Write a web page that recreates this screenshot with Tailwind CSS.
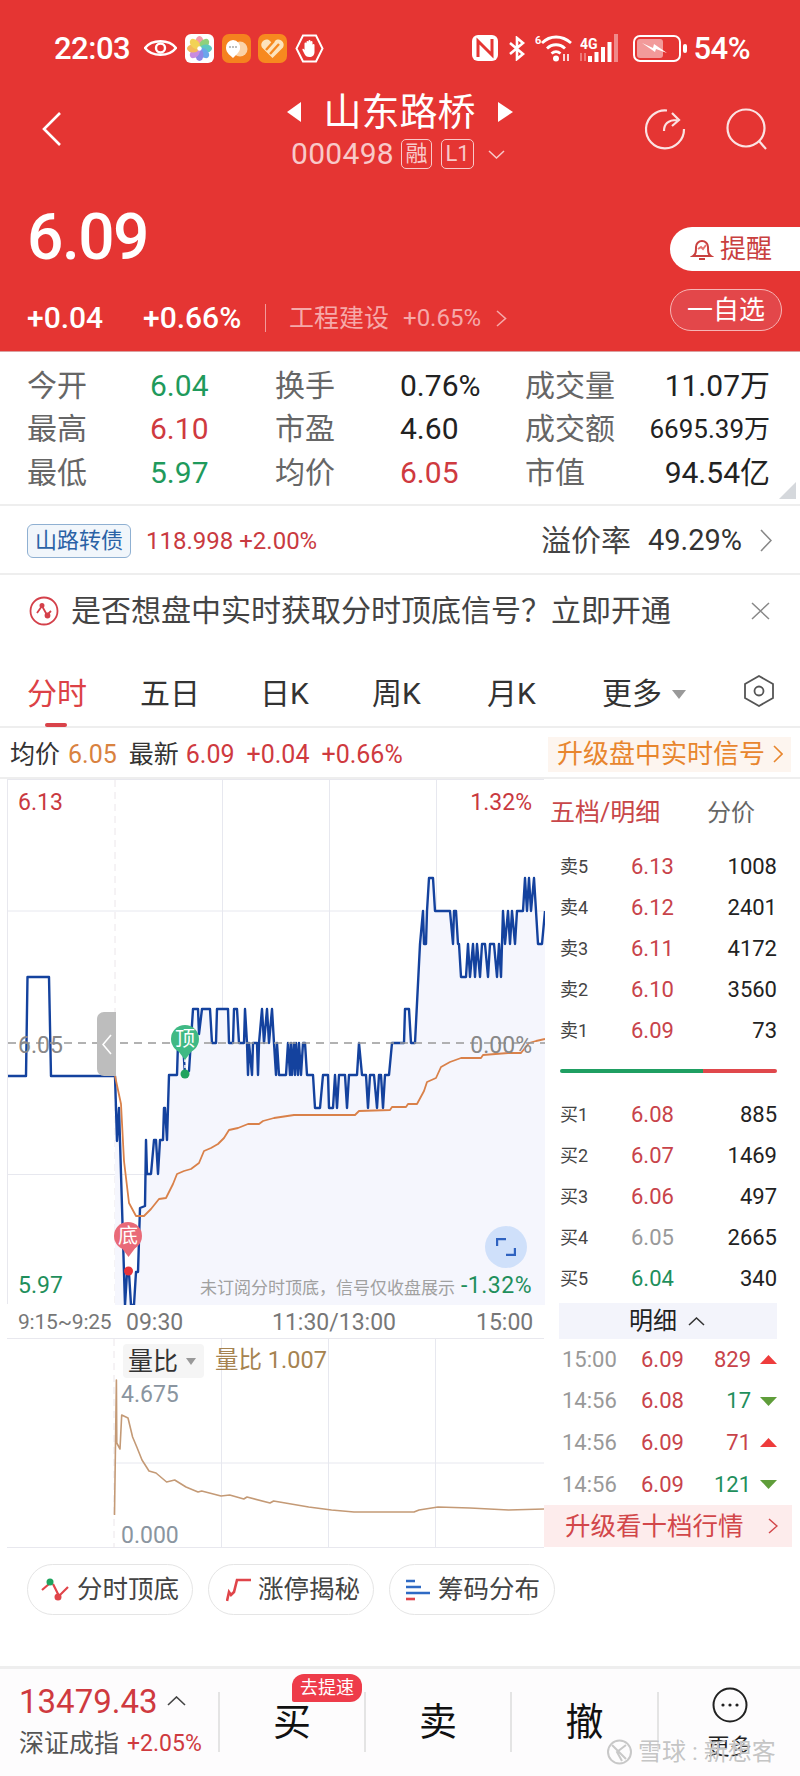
<!DOCTYPE html>
<html lang="zh-CN">
<head>
  <meta charset="UTF-8">
  <title>山东路桥 000498</title>
  <script src="https://cdn.jsdelivr.net/npm/@tailwindcss/browser@4"></script>
</head>
<body class="bg-white text-[#222] font-['Roboto','Noto_Sans_CJK_SC',sans-serif]">
<div class="w-[800px] h-[1776px] overflow-hidden relative">

  <!-- red quote header -->
  <header class="h-[352px] bg-[#e53533] text-white border-b border-[#d9a0a0]">
    <div class="h-[32px] translate-y-[32px] flex items-center pl-[54px] pr-[50px]">
      <span class="text-[31px] leading-none w-[80px] font-medium tracking-[-0.5px]">22:03</span>
      <svg class="ml-[10px]" width="33" height="16" viewBox="0 0 33 16" fill="none" stroke="#fff" stroke-width="2.4"><path d="M1 8C8-1 25-1 32 8 25 17 8 17 1 8Z"/><circle cx="16.5" cy="8" r="4.5"/></svg>
      <svg class="ml-[8px]" width="29" height="29" viewBox="0 0 29 29"><rect width="29" height="29" rx="6" fill="#fff"/><g transform="translate(14.5 14.5)"><ellipse cy="-6.5" rx="4" ry="6" fill="#f59aa8"/><ellipse cy="-6.5" rx="4" ry="6" fill="#8fd17a" transform="rotate(45)"/><ellipse cy="-6.5" rx="4" ry="6" fill="#5ec8c0" transform="rotate(90)"/><ellipse cy="-6.5" rx="4" ry="6" fill="#6aa6ec" transform="rotate(135)"/><ellipse cy="-6.5" rx="4" ry="6" fill="#8e86e6" transform="rotate(180)"/><ellipse cy="-6.5" rx="4" ry="6" fill="#c98be0" transform="rotate(225)"/><ellipse cy="-6.5" rx="4" ry="6" fill="#f4b85c" transform="rotate(270)"/><ellipse cy="-6.5" rx="4" ry="6" fill="#f2d255" transform="rotate(315)"/><circle r="2.2" fill="#fff"/></g></svg>
      <svg class="ml-[8px]" width="29" height="29" viewBox="0 0 29 29"><rect width="29" height="29" rx="7" fill="#f5821f"/><circle cx="18" cy="15" r="7.5" fill="#fbd3a8"/><path d="M11 6a7.5 7.5 0 0 1 7 9c-1 4-5 7-7 9-2-2-7-5-7-10a7.5 7.5 0 0 1 7-8Z" fill="#fff"/><circle cx="8" cy="13" r="1" fill="#aaa"/><circle cx="11" cy="13" r="1" fill="#aaa"/><circle cx="14" cy="13" r="1" fill="#aaa"/></svg>
      <svg class="ml-[7px]" width="29" height="29" viewBox="0 0 29 29"><rect width="29" height="29" rx="7" fill="#f7891f"/><path d="M14.5 24 4 13.5C1 8 8 3 12 7l2.5 2.5L17 7c4-4 11 1 8 6.5Z" fill="#fde3bd"/><path d="M8 16 16 7M12 20l9-10" stroke="#f7891f" stroke-width="2.4"/></svg>
      <svg class="ml-[8px]" width="29" height="29" viewBox="0 0 29 29"><path d="M8 1.500h13L27.500 14.500 21 27.500H8L1.500 14.500Z" fill="none" stroke="#fff" stroke-width="2"/><path d="M9.500 15V9.500a1 1 0 0 1 2 0V8a1 1 0 0 1 2 0V7a1 1 0 0 1 2 0v1a1 1 0 0 1 2 0v3a1 1 0 0 1 2 0v7c0 3-2 5-5 5-3 0-4-1-5-3l-2-4c-.5-1 1-2 2 0Z" fill="#fff"/></svg>
      <svg class="ml-auto" width="26" height="26" viewBox="0 0 26 26"><rect width="26" height="26" rx="6" fill="#fff"/><path d="M6 22V6l14 14V4" fill="none" stroke="#e53533" stroke-width="3"/></svg>
      <svg class="ml-[10px]" width="18" height="25" viewBox="0 0 18 25" fill="none" stroke="#fff" stroke-width="2.6"><path d="M2 7l13 11-6 5V2l6 5L2 18"/></svg>
      <svg class="ml-[9px]" width="37" height="28" viewBox="0 0 37 28"><text x="0" y="10" fill="#fff" font-size="11" font-weight="700">6</text><g fill="none" stroke="#fff" stroke-width="2.800"><path d="M7 9C15 1 27 1 36 9"/><path d="M12 14.500c5-5 13-5 18 0"/><path d="M16.500 19.500c3-2.500 6-2.500 9 0"/></g><circle cx="21" cy="24.500" r="3" fill="#fff"/><path d="M29 20v7M33 20v7" stroke="#fff" stroke-width="1.600"/></svg>
      <div class="ml-[8px] relative w-[46px] h-[28px]">
        <svg width="46" height="28" viewBox="0 0 46 28"><rect x="34" y="0" width="4" height="28" fill="#f08a8a"/><rect x="27.500" y="8" width="4" height="20" fill="#fff"/><rect x="21" y="13" width="4" height="15" fill="#fff"/><rect x="14.500" y="18" width="4" height="10" fill="#fff"/><rect x="8" y="22" width="4" height="6" fill="#fff"/><path d="M1 19v8M5 19v8" stroke="#f08a8a" stroke-width="1.600"/><text x="0" y="15" fill="#fff" font-size="14" font-weight="700">4G</text></svg>
      </div>
      <svg class="ml-[7px]" width="55" height="27" viewBox="0 0 55 27"><rect x="1" y="1" width="46" height="25" rx="6" fill="none" stroke="#fff" stroke-width="2"/><rect x="4" y="4" width="26" height="19" rx="3" fill="#f29a9a"/><path d="M9 8l11 5 1-4 13 9-11-4-1 3Z" fill="#fff"/><rect x="50" y="9" width="4" height="9" rx="2" fill="#fff"/></svg>
      <span class="ml-[5px] text-[31px] leading-none font-medium tracking-[-0.5px]">54%</span>
    </div>

    <div class="mt-[58px] h-[84px] grid grid-cols-[1fr_auto_1fr]">
      <div class="pl-[42px] pt-[22px]">
        <svg width="20" height="34" viewBox="0 0 20 34" fill="none" stroke="#fff" stroke-width="2.600"><path d="M18 1 2 17l16 16"/></svg>
      </div>
      <div class="flex flex-col items-center">
        <div class="flex items-center h-[44px]">
          <svg width="14" height="20" viewBox="0 0 14 20"><path d="M14 0v20L0 10Z" fill="#fff"/></svg>
          <span class="mx-[22px] text-[38px] leading-none">山东路桥</span>
          <svg width="15" height="20" viewBox="0 0 15 20"><path d="M0 0v20l15-10Z" fill="#fff"/></svg>
        </div>
        <div class="mt-[5px] flex items-center text-[#f8c9c9]">
          <span class="text-[30px] leading-none tracking-[0.3px] w-[110px]">000498</span>
          <span class="w-[31px] h-[30px] border-[1.5px] border-[#f8c9c9] rounded-[5px] flex items-center justify-center text-[22px] leading-none">融</span>
          <span class="ml-[9px] w-[33px] h-[30px] border-[1.5px] border-[#f8c9c9] rounded-[5px] flex items-center justify-center text-[22px] leading-none">L1</span>
          <svg class="ml-[14px] mr-[4px]" width="17" height="9" viewBox="0 0 17 9" fill="none" stroke="#f8c9c9" stroke-width="1.500"><path d="M1 1l7.500 7L16 1"/></svg>
        </div>
      </div>
      <div class="flex justify-end items-start pr-[32px] pt-[18px] gap-[40px]">
        <svg width="42" height="42" viewBox="0 0 42 42" fill="none" stroke="#fbe3e3" stroke-width="2.200"><path d="M23 2.500A19 19 0 1 0 40 21"/><path d="M20 23c0-8 5-11 13-11M28 5l7 7-7 6"/></svg>
        <svg width="42" height="42" viewBox="0 0 42 42" fill="none" stroke="#fbe3e3" stroke-width="2.200"><circle cx="20" cy="20" r="18.500"/><path d="M33 33l7 8"/></svg>
      </div>
    </div>

    <div class="mt-[30px] flex justify-between pl-[27px]">
      <div>
        <div class="text-[64px] leading-none h-[62px] mt-[2px] font-medium tracking-[-1.5px]">6.09</div>
        <div class="mt-[35px] flex items-center h-[30px]">
          <span class="w-[116px] text-[30px] leading-none font-medium">+0.04</span>
          <span class="text-[30px] leading-none font-medium w-[122px]">+0.66%</span>
          <span class="w-px h-[28px] bg-[#f29a9a]"></span>
          <span class="ml-[23px] text-[25px] leading-none text-[#f6a9a9]">工程建设</span>
          <span class="ml-[14px] text-[24px] leading-none text-[#f6a9a9]">+0.65%</span>
          <svg class="ml-[15px]" width="11" height="17" viewBox="0 0 11 17" fill="none" stroke="#f6a9a9" stroke-width="1.600"><path d="M1 1l8.500 7.500L1 16"/></svg>
        </div>
      </div>
      <div class="flex flex-col items-end mt-[23px]">
        <div class="w-[130px] h-[44px] bg-white rounded-l-[22px] flex items-center pl-[20px] text-[#c9403f]">
          <svg width="24" height="24" viewBox="0 0 24 24" fill="none" stroke="#c9403f" stroke-width="2"><path d="M3 19c3-2 3-4 3-9a6 6 0 0 1 12 0c0 5 0 7 3 9Z"/><path d="M9 22h6"/><path d="M8 12l3-2 2 2 3-4" stroke="#e5736f"/></svg>
          <span class="ml-[6px] text-[26px] leading-none">提醒</span>
        </div>
        <div class="mt-[18px] mr-[18px] w-[112px] h-[42px] rounded-[21px] bg-[#e3474a] border border-[#f6b5b5] flex items-center justify-center text-[26px] leading-none">一自选</div>
      </div>
    </div>
  </header>

  <!-- stats -->
  <section class="h-[154px] pt-[12px] px-[27px] border-b-2 border-[#eee] relative">
    <div class="grid grid-cols-[123px_125px_125px_125px_90px_155px] auto-rows-[43.5px] items-center text-[30px] leading-none">
      <span class="text-[#666]">今开</span><span class="text-[#1f9a5c]">6.04</span>
      <span class="text-[#666]">换手</span><span>0.76%</span>
      <span class="text-[#666]">成交量</span><span class="text-right">11.07万</span>
      <span class="text-[#666]">最高</span><span class="text-[#cf3a3f]">6.10</span>
      <span class="text-[#666]">市盈</span><span>4.60</span>
      <span class="text-[#666]">成交额</span><span class="text-right text-[26px]">6695.39万</span>
      <span class="text-[#666]">最低</span><span class="text-[#1f9a5c]">5.97</span>
      <span class="text-[#666]">均价</span><span class="text-[#cf3a3f]">6.05</span>
      <span class="text-[#666]">市值</span><span class="text-right">94.54亿</span>
    </div>
    <svg class="absolute right-[4px] bottom-[5px]" width="17" height="17" viewBox="0 0 17 17"><path d="M17 0v17H0Z" fill="#d5d8dc"/></svg>
  </section>

  <!-- convertible bond -->
  <section class="h-[69px] pt-[2px] flex items-center pl-[27px] pr-[28px] border-b-2 border-[#eee]">
    <span class="w-[104px] h-[34px] rounded-[6px] border border-[#8fb0d2] bg-[#f1f6fb] text-[#2a62a6] text-[22px] leading-none flex items-center justify-center">山路转债</span>
    <span class="ml-[15px] text-[24px] leading-none text-[#c93a3f]">118.998 +2.00%</span>
    <span class="ml-auto text-[30px] leading-none text-[#444]">溢价率</span>
    <span class="ml-[17px] text-[29px] leading-none text-[#333]">49.29%</span>
    <svg class="ml-[18px]" width="12" height="23" viewBox="0 0 12 23" fill="none" stroke="#888" stroke-width="1.600"><path d="M1 1l10 10.500L1 22"/></svg>
  </section>

  <!-- signal promo -->
  <section class="h-[72px] flex items-center pl-[29px] pr-[30px]">
    <svg width="30" height="30" viewBox="0 0 30 30" fill="none" stroke="#d4404a" stroke-width="1.800"><circle cx="15" cy="15" r="13.500"/><path d="M8 17l5-7 5 9 4-4"/><circle cx="13" cy="9.500" r="1.600" fill="#d4404a"/><circle cx="18.500" cy="19.500" r="2" fill="#d4404a"/></svg>
    <span class="ml-[12px] text-[30px] leading-none text-[#444] whitespace-nowrap">是否想盘中实时获取分时顶底信号？立即开通</span>
    <svg class="ml-auto" width="19" height="18" viewBox="0 0 19 18" fill="none" stroke="#888" stroke-width="1.500"><path d="M1 1l17 16M18 1 1 17"/></svg>
  </section>

  <!-- period tabs -->
  <nav class="h-[81px] pt-[23px] pl-[27px] border-b-2 border-[#eee] grid grid-cols-[113px_120px_112px_115px_115px_142px_auto] items-start text-[30px] leading-none text-[#333]">
    <span class="relative h-[48px] flex items-center text-[#dc4146]">分时<i class="absolute left-[18px] top-[53px] w-[22px] h-[4px] rounded-[2px] bg-[#d9434a]"></i></span>
    <span class="h-[48px] flex items-center">五日</span>
    <span class="h-[48px] flex items-center">日K</span>
    <span class="h-[48px] flex items-center">周K</span>
    <span class="h-[48px] flex items-center">月K</span>
    <span class="h-[48px] flex items-center">更多<svg class="ml-[10px]" width="14" height="9" viewBox="0 0 14 9"><path d="M0 0h14L7 9Z" fill="#999"/></svg></span>
    <svg class="mt-[5px]" width="30" height="32" viewBox="0 0 30 32" fill="none" stroke="#555" stroke-width="1.800"><path d="M15 1l14 8v14l-14 8-14-8V9Z"/><circle cx="15" cy="16" r="4.500"/></svg>
  </nav>

  <!-- price line -->
  <section class="h-[51px] pt-[3px] flex items-center pl-[10px] pr-[9px] border-b-2 border-[#eee] text-[25px] leading-none">
    <span class="text-[#333]">均价</span>
    <span class="ml-[8px] text-[#d9823f] text-[25px]">6.05</span>
    <span class="ml-[12px] text-[#333]">最新</span>
    <span class="ml-[7px] text-[#cf3a3f] text-[25px]">6.09</span>
    <span class="ml-[12px] text-[#cf3a3f] text-[25px]">+0.04</span>
    <span class="ml-[12px] text-[#cf3a3f] text-[25px]">+0.66%</span>
    <span class="ml-auto w-[243px] h-[35px] bg-[#fdf5ef] flex items-center pl-[9px] text-[#e8862e] text-[26px]">升级盘中实时信号<svg class="ml-[8px]" width="10" height="18" viewBox="0 0 10 18" fill="none" stroke="#e8862e" stroke-width="1.600"><path d="M1 1l8 8-8 8"/></svg></span>
  </section>

  <main class="flex">
    <!-- intraday chart column -->
    <div class="w-[544px] pl-[7px] shrink-0">
      <div class="relative w-[537px] h-[525px] border-t border-l border-[#e8e8ee]">
        <svg class="absolute left-0 top-0" width="537" height="525" viewBox="7 779 537 525" fill="none">
          <path d="M221.500 779V1304M328.500 779V1304M435.500 779V1304M7 910H544M7 1173.500H544" stroke="#e7e8ef"/>
          <path d="M114 779V1304" stroke="#ebe6ea" stroke-dasharray="7 5"/>
          <polygon fill="#f5f6fd" points="114,1075 116,1140 118,1107 124,1304 126,1272 128,1272 130,1304 133,1304 135,1271 137,1271 139,1207 144,1205 145,1139 146,1173 150,1173 153,1139 155,1139 157,1173 159,1139 162,1139 163,1107 164,1107 166,1139 168,1074 176,1074 177,1042 182,1042 184,1074 188,1070 192,1008 197,1008 198,1033 201,1008 209,1008 211,1042 215,1042 216,1008 227,1008 228,1042 232,1042 233,1008 236,1008 238,1042 243,1042 244,1008 246,1042 247,1074 248,1042 251,1074 252,1042 256,1042 257,1074 258,1042 261,1008 263,1042 266,1008 268,1042 271,1008 273,1042 275,1074 276,1042 278,1074 285,1074 287,1042 289,1074 290,1042 291,1074 293,1042 294,1074 295,1042 297,1074 298,1042 300,1074 302,1042 304,1042 306,1074 312,1074 314,1107 319,1107 322,1074 327,1074 328,1107 332,1107 334,1074 336,1107 338,1074 344,1074 346,1107 348,1074 356,1074 358,1042 361,1074 365,1074 367,1107 369,1074 373,1074 376,1107 378,1074 380,1074 382,1107 384,1074 388,1074 391,1042 403,1042 404,1008 408,1008 410,1042 414,1042 419,943 422,910 423,943 425,943 426,910 428,877 432,877 434,910 449,910 452,943 453,910 455,910 457,943 458,943 460,976 465,976 467,943 469,976 472,943 474,976 476,943 479,976 481,943 484,943 487,976 489,943 493,943 496,976 498,943 500,976 502,910 504,943 507,910 509,943 511,910 514,943 516,910 522,910 524,877 526,910 528,877 530,910 533,877 537,943 541,943 544,910 544,1304 114,1304"/>
          <polyline stroke="#14429e" stroke-width="2.400" stroke-linejoin="round" points="7,1075 25,1075 26.500,976 48,976 50,1075 114,1075 116,1140 118,1107 124,1304 126,1272 128,1272 130,1304 133,1304 135,1271 137,1271 139,1207 144,1205 145,1139 146,1173 150,1173 153,1139 155,1139 157,1173 159,1139 162,1139 163,1107 164,1107 166,1139 168,1074 176,1074 177,1042 182,1042 184,1074 188,1070 192,1008 197,1008 198,1033 201,1008 209,1008 211,1042 215,1042 216,1008 227,1008 228,1042 232,1042 233,1008 236,1008 238,1042 243,1042 244,1008 246,1042 247,1074 248,1042 251,1074 252,1042 256,1042 257,1074 258,1042 261,1008 263,1042 266,1008 268,1042 271,1008 273,1042 275,1074 276,1042 278,1074 285,1074 287,1042 289,1074 290,1042 291,1074 293,1042 294,1074 295,1042 297,1074 298,1042 300,1074 302,1042 304,1042 306,1074 312,1074 314,1107 319,1107 322,1074 327,1074 328,1107 332,1107 334,1074 336,1107 338,1074 344,1074 346,1107 348,1074 356,1074 358,1042 361,1074 365,1074 367,1107 369,1074 373,1074 376,1107 378,1074 380,1074 382,1107 384,1074 388,1074 391,1042 403,1042 404,1008 408,1008 410,1042 414,1042 419,943 422,910 423,943 425,943 426,910 428,877 432,877 434,910 449,910 452,943 453,910 455,910 457,943 458,943 460,976 465,976 467,943 469,976 472,943 474,976 476,943 479,976 481,943 484,943 487,976 489,943 493,943 496,976 498,943 500,976 502,910 504,943 507,910 509,943 511,910 514,943 516,910 522,910 524,877 526,910 528,877 530,910 533,877 537,943 541,943 544,910"/>
          <polyline stroke="#d9814a" stroke-width="1.800" stroke-linejoin="round" points="114,1075 120,1103 123,1160 128,1202 135,1215 143,1215 150,1208 158,1198 165,1197 172,1183 176,1173 183,1170 190,1168 198,1162 203,1150 210,1147 217,1143 223,1137 228,1129 237,1127 247,1123 258,1123 262,1120 273,1117 293,1114 354,1114 358,1110 389,1109 391,1106 405,1106 407,1103 416,1103 423,1090 426,1081 435,1077 440,1066 449,1061 460,1057 480,1057 482,1054 507,1052 520,1052 528,1042 535,1040 544,1038"/>
          <path d="M7 1042H544" stroke="#999" stroke-width="1.600" stroke-dasharray="8 6"/>
          <path d="M184 1058V1073M127.500 1255V1270" stroke="#fff" stroke-width="1.500" stroke-dasharray="3 3"/>
          <polygon fill="#3fb984" points="175,1047 193,1047 184,1059"/>
          <polygon fill="#e96a78" points="118.500,1244 136.500,1244 127.500,1256"/>
          <circle cx="184" cy="1073" r="4.500" fill="#1fa35f"/>
          <circle cx="127.500" cy="1270" r="4.500" fill="#e8343a"/>
        </svg>
        <span class="absolute left-[10px] top-[11px] text-[23px] leading-none text-[#c9393f]">6.13</span>
        <span class="absolute right-[12px] top-[11px] text-[23px] leading-none text-[#c9393f]">1.32%</span>
        <span class="absolute left-[10px] top-[254px] text-[23px] leading-none text-[#888]">6.05</span>
        <span class="absolute right-[12px] top-[254px] text-[23px] leading-none text-[#888]">0.00%</span>
        <span class="absolute left-[10px] top-[494px] text-[23px] leading-none text-[#1f8f5c]">5.97</span>
        <span class="absolute right-[12px] top-[494px] text-[23px] leading-none text-[#1f8f5c] tracking-[0.5px]">-1.32%</span>
        <span class="absolute left-[192px] top-[500px] text-[17px] leading-none text-[#a0a0a0] whitespace-nowrap">未订阅分时顶底，信号仅收盘展示</span>
        <div class="absolute left-[89px] top-[232px] w-[19px] h-[64px] bg-[#bdbdbd] rounded-l-[7px] flex items-center justify-center">
          <svg width="10" height="21" viewBox="0 0 10 21" fill="none" stroke="#fff" stroke-width="1.600"><path d="M9 1 1 10.500 9 20"/></svg>
        </div>
        <div class="absolute left-[163px] top-[245px] w-[28px] h-[28px] rounded-full bg-[#3fb984] text-white text-[20px] leading-none flex items-center justify-center">顶</div>
        <div class="absolute left-[106px] top-[442px] w-[28px] h-[28px] rounded-full bg-[#e96a78] text-white text-[20px] leading-none flex items-center justify-center">底</div>
        <div class="absolute left-[477px] top-[446px] w-[42px] h-[42px] rounded-full bg-[#cfe0fa] flex items-center justify-center">
          <svg width="20" height="18" viewBox="0 0 20 18" fill="none" stroke="#2e62c0" stroke-width="2.400"><path d="M1 8V1h9M19 10v7h-9"/></svg>
        </div>
      </div>

      <div class="h-[35px] pt-[2px] pl-[11px] grid grid-cols-[108px_146px_204px_auto] items-center text-[23px] leading-none text-[#777] border-b border-[#e8e8ee]">
        <span class="text-[21px] tracking-[-0.2px]">9:15~9:25</span>
        <span>09:30</span>
        <span>11:30/13:00</span>
        <span>15:00</span>
      </div>

      <div class="relative w-[537px] h-[209px] border-b border-[#e8e8ee]">
        <svg class="absolute left-0 top-0" width="537" height="209" viewBox="7 1339 537 209" fill="none">
          <path d="M221.500 1339V1548M328.500 1339V1548M435.500 1339V1548M114 1463H544" stroke="#e7e8ef"/>
          <path d="M114 1339V1548" stroke="#ebe6ea" stroke-dasharray="7 5"/>
          <polyline stroke="#c49a76" stroke-width="1.600" stroke-linejoin="round" points="114.500,1515 116.400,1380 116.800,1443 120,1449 121.700,1415 128,1418 132.600,1437 136.800,1447 142,1460 149,1471 156,1473 166.600,1482 174.700,1480 186,1487 198,1492 201.700,1491 221,1496 229.700,1495 243.800,1499 247,1497 270,1503 273.600,1501 308.700,1507 331.500,1510 354,1512 386,1512 414,1512 419,1510 438,1507 470,1508 508.600,1510 544,1509"/>
        </svg>
        <div class="absolute left-[116px] top-[5px] w-[81px] h-[34px] bg-[#f5f5f5] rounded-[4px] flex items-center pl-[5px] text-[25px] leading-none text-[#333]">量比<svg class="ml-[8px]" width="10" height="7" viewBox="0 0 10 7"><path d="M0 0h10L5 7Z" fill="#999"/></svg></div>
        <span class="absolute left-[208px] top-[10px] text-[23.500px] leading-none text-[#a68350]">量比 1.007</span>
        <span class="absolute left-[114px] top-[44px] text-[23px] leading-none text-[#8a95a0]">4.675</span>
        <span class="absolute left-[114px] top-[185px] text-[23px] leading-none text-[#8a95a0]">0.000</span>
      </div>
    </div>

    <!-- order book column -->
    <aside class="flex-1">
      <div class="h-[67px] pl-[6px] pr-[45px] flex items-center justify-between">
        <span class="text-[25px] leading-none text-[#c8474a]">五档/明细</span>
        <span class="text-[24px] leading-none text-[#666]">分价</span>
      </div>
      <ul class="pl-[16px] pr-[23px] text-[22px] leading-none">
        <li class="h-[41px] grid grid-cols-[71px_1fr_auto] items-center"><span class="text-[18px] text-[#444]">卖5</span><span class="text-[#c8434a]">6.13</span><span>1008</span></li>
        <li class="h-[41px] grid grid-cols-[71px_1fr_auto] items-center"><span class="text-[18px] text-[#444]">卖4</span><span class="text-[#c8434a]">6.12</span><span>2401</span></li>
        <li class="h-[41px] grid grid-cols-[71px_1fr_auto] items-center"><span class="text-[18px] text-[#444]">卖3</span><span class="text-[#c8434a]">6.11</span><span>4172</span></li>
        <li class="h-[41px] grid grid-cols-[71px_1fr_auto] items-center"><span class="text-[18px] text-[#444]">卖2</span><span class="text-[#c8434a]">6.10</span><span>3560</span></li>
        <li class="h-[41px] grid grid-cols-[71px_1fr_auto] items-center"><span class="text-[18px] text-[#444]">卖1</span><span class="text-[#c8434a]">6.09</span><span>73</span></li>
      </ul>
      <div class="h-[43px] pb-[4px] pl-[16px] pr-[23px] flex items-center">
        <div class="w-[143px] h-[4px] bg-[#1f9f62] rounded-l-[2px]"></div>
        <div class="flex-1 h-[4px] bg-[#e0484c] rounded-r-[2px]"></div>
      </div>
      <ul class="pl-[16px] pr-[23px] text-[22px] leading-none">
        <li class="h-[41px] grid grid-cols-[71px_1fr_auto] items-center"><span class="text-[18px] text-[#444]">买1</span><span class="text-[#c8434a]">6.08</span><span>885</span></li>
        <li class="h-[41px] grid grid-cols-[71px_1fr_auto] items-center"><span class="text-[18px] text-[#444]">买2</span><span class="text-[#c8434a]">6.07</span><span>1469</span></li>
        <li class="h-[41px] grid grid-cols-[71px_1fr_auto] items-center"><span class="text-[18px] text-[#444]">买3</span><span class="text-[#c8434a]">6.06</span><span>497</span></li>
        <li class="h-[41px] grid grid-cols-[71px_1fr_auto] items-center"><span class="text-[18px] text-[#444]">买4</span><span class="text-[#999]">6.05</span><span>2665</span></li>
        <li class="h-[41px] grid grid-cols-[71px_1fr_auto] items-center"><span class="text-[18px] text-[#444]">买5</span><span class="text-[#1f8f5c]">6.04</span><span>340</span></li>
      </ul>
      <div class="mt-[4px] ml-[15px] mr-[23px] h-[36px] bg-[#f3f4fb] flex items-center pl-[70px] text-[24px] leading-none">
        明细<svg class="ml-[11px]" width="17" height="9" viewBox="0 0 17 9" fill="none" stroke="#333" stroke-width="1.500"><path d="M1 8l7.500-7L16 8"/></svg>
      </div>
      <ul class="pl-[18px] pr-[23px] text-[22px] leading-none">
        <li class="h-[41.600px] grid grid-cols-[79px_1fr_auto_26px] items-center"><span class="text-[#999]">15:00</span><span class="text-[#c8434a]">6.09</span><span class="text-[#c8434a]">829</span><svg class="justify-self-end" width="17" height="9" viewBox="0 0 17 9"><path d="M0 9h17L8.500 0Z" fill="#ee3c3c"/></svg></li>
        <li class="h-[41.600px] grid grid-cols-[79px_1fr_auto_26px] items-center"><span class="text-[#999]">14:56</span><span class="text-[#c8434a]">6.08</span><span class="text-[#1f8f5c]">17</span><svg class="justify-self-end" width="17" height="9" viewBox="0 0 17 9"><path d="M0 0h17L8.500 9Z" fill="#5f9d3a"/></svg></li>
        <li class="h-[41.600px] grid grid-cols-[79px_1fr_auto_26px] items-center"><span class="text-[#999]">14:56</span><span class="text-[#c8434a]">6.09</span><span class="text-[#c8434a]">71</span><svg class="justify-self-end" width="17" height="9" viewBox="0 0 17 9"><path d="M0 9h17L8.500 0Z" fill="#ee3c3c"/></svg></li>
        <li class="h-[41.600px] grid grid-cols-[79px_1fr_auto_26px] items-center"><span class="text-[#999]">14:56</span><span class="text-[#c8434a]">6.09</span><span class="text-[#1f8f5c]">121</span><svg class="justify-self-end" width="17" height="9" viewBox="0 0 17 9"><path d="M0 0h17L8.500 9Z" fill="#5f9d3a"/></svg></li>
      </ul>
      <div class="mr-[8px] h-[42px] bg-[#fdecec] flex items-center pl-[21px] text-[#d2474a] text-[25.500px] leading-none">
        升级看十档行情<svg class="ml-[24px]" width="10" height="16" viewBox="0 0 10 16" fill="none" stroke="#d2474a" stroke-width="1.500"><path d="M1 1l8 7-8 7"/></svg>
      </div>
    </aside>
  </main>

  <!-- feature chips -->
  <section class="h-[118px] pt-[16px] pl-[27px] flex items-start gap-[15px] text-[25.500px] leading-none text-[#444]">
    <div class="w-[166px] h-[51px] rounded-[26px] border border-[#e5e5e5] flex items-center pl-[13px]">
      <svg width="28" height="24" viewBox="0 0 28 24" fill="none" stroke="#e0454a" stroke-width="2.200"><path d="M1 12l7-6M12 6l6 12 9-9"/><circle cx="9" cy="4" r="3.500" fill="#1fa35f" stroke="none"/><circle cx="17" cy="19" r="3.500" fill="#e0454a" stroke="none"/></svg>
      <span class="ml-[8px] pt-[1px]">分时顶底</span>
    </div>
    <div class="w-[166px] h-[51px] rounded-[26px] border border-[#e5e5e5] flex items-center pl-[17px]">
      <svg width="25" height="25" viewBox="0 0 25 25" fill="none" stroke="#e0454a" stroke-width="2.600"><path d="M1 24l2-9 2 3 3-3 3-12h14"/></svg>
      <span class="ml-[7px] pt-[1px]">涨停揭秘</span>
    </div>
    <div class="w-[166px] h-[51px] rounded-[26px] border border-[#e5e5e5] flex items-center pl-[16px]">
      <svg width="24" height="24" viewBox="0 0 24 24" fill="none" stroke-width="2.600"><path d="M0 3h9M0 9h15M0 15h24" stroke="#2f6ac4"/><path d="M0 21h9" stroke="#e0454a"/></svg>
      <span class="ml-[8px] pt-[1px]">筹码分布</span>
    </div>
  </section>

  <!-- bottom trade bar -->
  <footer class="h-[110px] border-t-[3px] border-[#eee] bg-[#fdfcfd] pt-[23px] flex">
    <div class="w-[218px] h-[60px] pl-[19px] flex flex-col justify-center shrink-0">
      <div class="h-[42px] shrink-0 flex items-center">
        <span class="text-[33px] leading-none text-[#cf3a3f]">13479.43</span>
        <svg class="ml-[9px]" width="19" height="10" viewBox="0 0 19 10" fill="none" stroke="#444" stroke-width="1.600"><path d="M1 9l8.500-8L18 9"/></svg>
      </div>
      <div class="h-[42px] shrink-0 flex items-center">
        <span class="text-[25px] leading-none text-[#555]">深证成指</span>
        <span class="ml-[8px] text-[23px] leading-none text-[#cf3a3f]">+2.05%</span>
      </div>
    </div>
    <div class="relative w-[146px] h-[60px] border-l-2 border-[#e4e4e4] flex items-center justify-center text-[38px] leading-none text-[#111]">买
      <span class="absolute left-[72px] top-[-18px] w-[70px] h-[28px] bg-[#ee3c4a] rounded-[12px] rounded-bl-[2px] text-white text-[18px] leading-none flex items-center justify-center">去提速</span>
    </div>
    <div class="w-[146px] h-[60px] border-l-2 border-[#e4e4e4] flex items-center justify-center text-[38px] leading-none text-[#111]">卖</div>
    <div class="w-[147px] h-[60px] border-l-2 border-[#e4e4e4] flex items-center justify-center text-[38px] leading-none text-[#111]">撤</div>
    <div class="flex-1 h-[60px] border-l-2 border-[#e4e4e4] flex flex-col items-center justify-center">
      <svg class="shrink-0" width="36" height="36" viewBox="0 0 36 36" fill="none"><circle cx="18" cy="18" r="16.500" stroke="#222" stroke-width="2"/><circle cx="11" cy="18" r="1.600" fill="#222"/><circle cx="18" cy="18" r="1.600" fill="#222"/><circle cx="25" cy="18" r="1.600" fill="#222"/></svg>
      <span class="mt-[13px] text-[22px] leading-none text-[#222] shrink-0">更多</span>
    </div>
  </footer>

  <!-- site watermark -->
  <div class="absolute left-[606px] top-[1739px] flex items-center text-[#bdbdbd]/90 text-[24px] leading-none whitespace-nowrap">
    <svg width="27" height="26" viewBox="0 0 27 26" fill="none" stroke="#c8c8c8" stroke-width="2"><circle cx="13.500" cy="13" r="11.500"/><path d="M6 6l14 14M20 6 11 13l5 9"/></svg>
    <span class="ml-[5px] [text-shadow:0_0_1px_#fff]">雪球 : 新想客</span>
  </div>
</div>
</body>
</html>
